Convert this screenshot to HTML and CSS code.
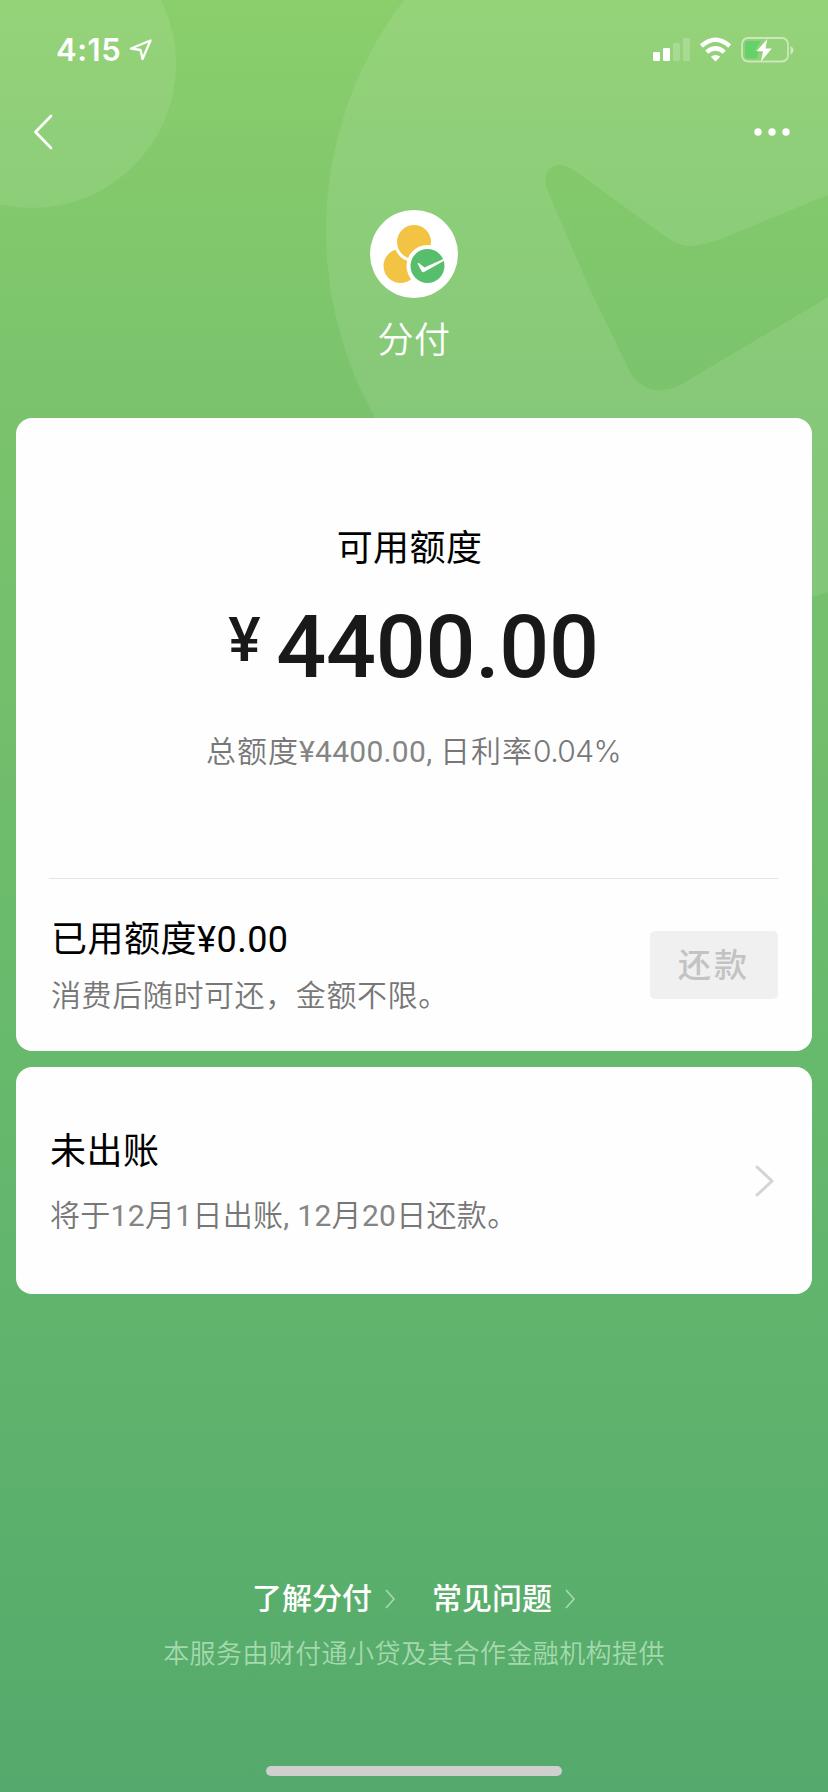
FILE: index.html
```html
<!DOCTYPE html>
<html lang="zh-CN">
<head>
<meta charset="utf-8">
<title>分付</title>
<link rel="stylesheet" href="styles.css">
</head>
<body>
<div class="page">
  <svg class="backdrop" viewBox="0 0 828 700" aria-hidden="true">
    <g fill="#fff" fill-opacity=".095">
      <circle cx="32" cy="64" r="144"/>
      <path fill-rule="evenodd" d="M707 -150a381 381 0 1 0 0 762a381 381 0 1 0 0-762ZM546 187Q543 169 556 165Q566 163 586 179L662 234Q678 246 690 246Q700 246 721 239L840 190V290L682 384Q664 393 650 389Q634 383 628 368L589 287Z"/>
    </g>
  </svg>

  <header class="status">
    <span class="time">4:15</span>
    <svg class="locate" width="24" height="22" viewBox="0 0 24 22"><path d="M2 9.500 21.500 1.500 13.500 20 11.500 11Z" fill="none" stroke="#fff" stroke-width="2.300" stroke-linejoin="round"/></svg>
    <svg class="signals" width="144" height="28" viewBox="0 0 144 28">
      <g fill="#fff">
        <rect x="1" y="15" width="7" height="9" rx="1.300"/>
        <rect x="11" y="11" width="7" height="13" rx="1.300"/>
        <rect x="21" y="6" width="7" height="18" rx="1.300" opacity=".2"/>
        <rect x="31" y="1" width="7" height="23" rx="1.300" opacity=".2"/>
        <path d="M63.500 24.600 58.800 19.800Q63.500 16.200 68.200 19.800Z"/>
      </g>
      <g fill="none" stroke="#fff" stroke-width="4.400">
        <path d="M49.300 9Q63.500-3.400 77.700 9"/>
        <path d="M54.700 15.100Q63.500 7.600 72.300 15.100"/>
      </g>
      <rect x="90" y="1" width="46" height="23.500" rx="6" fill="none" stroke="#fff" stroke-opacity=".5" stroke-width="1.800"/>
      <path d="M138.500 9v8.500q3-1.500 3-4.200t-3-4.300Z" fill="#fff" opacity=".55"/>
      <path d="M96 4H109L102.500 14H107L105 21.500H96Q93 21.500 93 18.500V7Q93 4 96 4Z" fill="#64d16b"/>
      <path d="M115.300 2 104.500 14.200H111L109 24.500 119.800 11.500H113.500Z" fill="#fff"/>
    </svg>
  </header>

  <nav class="nav">
    <svg width="22" height="38" viewBox="0 0 22 38"><path d="M19 3 3.500 19 19 35" fill="none" stroke="#fff" stroke-width="2.700" stroke-linecap="round" stroke-linejoin="round"/></svg>
    <svg width="38" height="10" viewBox="0 0 38 10" fill="#fff"><circle cx="5" cy="5" r="3.700"/><circle cx="19" cy="5" r="3.700"/><circle cx="33" cy="5" r="3.700"/></svg>
  </nav>

  <section class="brand">
    <svg width="88" height="88" viewBox="0 0 88 88">
      <circle cx="44" cy="44" r="44" fill="#fff"/>
      <circle cx="30.500" cy="56" r="17" fill="#f3c344"/>
      <circle cx="44" cy="32" r="20" fill="#fff"/>
      <circle cx="44" cy="32" r="17" fill="#f3c344"/>
      <circle cx="57.500" cy="56" r="21" fill="#fff"/>
      <circle cx="57.500" cy="56" r="17" fill="#57be6b"/>
      <path d="M47.500 53.500Q49 52.500 50 54L54.500 57.500 74.500 48.500V50.500L54 62Q52.500 63 51.500 61Z" fill="#fff"/>
    </svg>
    <h1 class="brand-name">分付</h1>
  </section>

  <main class="cards">
    <section class="card quota">
      <h2 class="quota-title">可用额度</h2>
      <div class="amount"><span class="yen">¥</span><span class="figure">4400.00</span></div>
      <p class="quota-note">总额度<span class="narrow">¥4400.00, </span>日利率<span class="rate">0.04%</span></p>
      <div class="used">
        <div class="used-text">
          <h3 class="title">已用额度¥0.00</h3>
          <p class="note">消费后随时可还，金额不限。</p>
        </div>
        <button class="repay" disabled>还款</button>
      </div>
    </section>

    <section class="card bill">
      <div>
        <h3 class="title">未出账</h3>
        <p class="note bill-note">将于<span class="num">12</span>月<span class="num">1</span>日出账<span class="num">, 12</span>月<span class="num">20</span>日还款。</p>
      </div>
      <svg width="22" height="36" viewBox="0 0 22 36"><path d="M3 4 18 18 3 32" fill="none" stroke="#d4d4d4" stroke-width="3" stroke-linecap="round" stroke-linejoin="round"/></svg>
    </section>
  </main>

  <footer class="footer">
    <div class="links">
      <a class="link">了解分付<svg width="12" height="20" viewBox="0 0 12 20"><path d="M2 1 10 10 2 19" fill="none" stroke="#a4d9ad" stroke-width="1.700"/></svg></a>
      <a class="link">常见问题<svg width="12" height="20" viewBox="0 0 12 20"><path d="M2 1 10 10 2 19" fill="none" stroke="#a4d9ad" stroke-width="1.700"/></svg></a>
    </div>
    <p class="provider">本服务由财付通小贷及其合作金融机构提供</p>
    <div class="home-bar"></div>
  </footer>
</div>
</body>
</html>
```
FILE: styles.css
```css
* { box-sizing: border-box; margin: 0; padding: 0; }

body { background: #56aa6c; }

.page {
  position: relative;
  display: flex;
  flex-direction: column;
  width: 828px;
  height: 1792px;
  overflow: hidden;
  background: linear-gradient(180deg, #8bcf6c 0, #84ca6c 150px, #7ac36c 420px, #67b96c 1060px, #5aaf6c 1560px, #55a96c 1792px);
  font-family: Roboto, "Noto Sans CJK SC", sans-serif;
  color: #000;
}

.backdrop { position: absolute; top: 0; left: 0; width: 828px; height: 700px; }

.status, .nav, .brand, .cards, .footer { position: relative; }

.status { display: flex; align-items: center; height: 100px; padding: 0 32px 0 56px; }
.time { font: 600 31px/40px Inter, sans-serif; color: #fff; letter-spacing: .5px; }
.locate { margin-left: 8px; }
.signals { margin-left: auto; margin-top: 2px; }

.nav { display: flex; align-items: center; justify-content: space-between; height: 64px; padding: 0 37px 0 32px; }

.brand { display: flex; flex-direction: column; align-items: center; height: 254px; padding-top: 46px; }
.brand-name { margin-top: 16px; font-size: 36px; line-height: 54px; font-weight: 350; letter-spacing: .5px; color: #fff; }

.cards { display: flex; flex-direction: column; gap: 16px; padding: 0 16px; }
.card { background: #fefefe; border-radius: 16px; }

.quota { display: flex; flex-direction: column; height: 633px; padding: 105px 34px 0 33px; }
.quota-title { align-self: center; margin-right: 8px; font-size: 36px; line-height: 52px; font-weight: 400; letter-spacing: .4px; }
.amount { display: flex; justify-content: center; height: 120px; margin-top: 12px; color: #191919; font-weight: 500; }
.yen { width: 48px; padding-top: 9px; font-size: 61px; line-height: 88px; }
.figure { font-size: 88px; line-height: 120px; letter-spacing: -.3px; }
.quota-note { margin-top: 22px; text-align: center; white-space: pre; font-size: 30px; line-height: 44px; font-weight: 350; color: #777; letter-spacing: 1px; }
.narrow { font-weight: 400; letter-spacing: .3px; color: #858585; }
.rate { font-family: Inter, sans-serif; letter-spacing: -.6px; }

.used { display: flex; justify-content: space-between; margin-top: 104px; padding-top: 34px; border-top: 1px solid #e4e4e4; }
.used-text { padding-left: 2px; }
.title { font-size: 36px; line-height: 54px; font-weight: 400; letter-spacing: .5px; }
.note { margin-top: 7px; font-size: 30px; line-height: 44px; font-weight: 350; letter-spacing: .6px; color: #777; }
.repay { width: 128px; height: 68px; margin-top: 18px; padding-bottom: 3px; border: 0; border-radius: 5px; background: #f0f0f0; color: #c3c3c3; font: 500 33px/65px "Noto Sans CJK SC", sans-serif; letter-spacing: 3px; }

.bill { display: flex; justify-content: space-between; height: 227px; padding: 58px 36px 0 34px; }
.bill svg { margin-top: 38px; }
.bill-note { margin-top: 15px; letter-spacing: .3px; }
.num { font-weight: 400; color: #858585; }

.footer { flex: 1; display: flex; flex-direction: column; align-items: center; padding-top: 283px; }
.links { display: flex; gap: 36px; }
.link { display: flex; align-items: center; gap: 12px; font-size: 30px; line-height: 44px; font-weight: 500; color: #fff; }
.provider { margin-top: 14px; font-size: 26px; line-height: 38px; font-weight: 350; letter-spacing: .4px; color: #a5d9ae; }
.home-bar { width: 296px; height: 10px; margin-top: auto; margin-bottom: 16px; border-radius: 5px; background: #cfcfcf; }
```
